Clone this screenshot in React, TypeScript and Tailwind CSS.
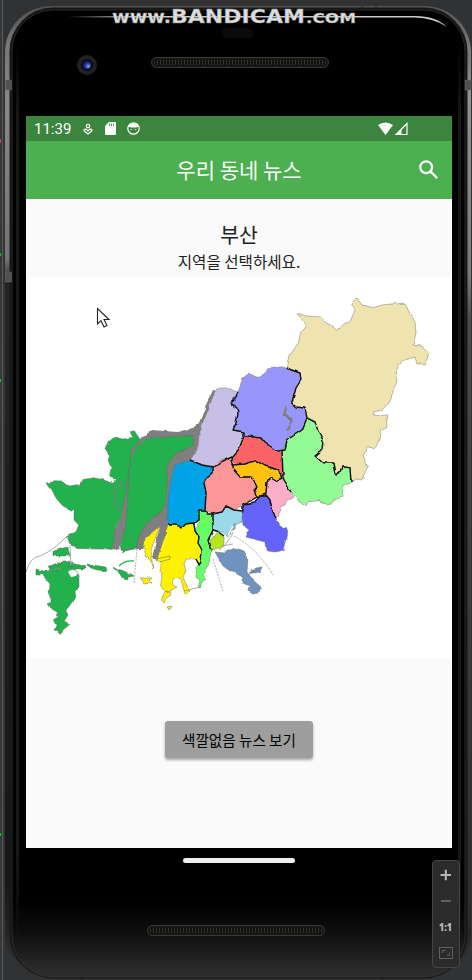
import React from "react";

type Region = { fill: string; points: string };

const regions: Region[] = [
  { fill: "#22b14c", points: "46,483 54,481.7 63,482 69,486 81,484 83,479.5 94,477.7 104,480 112.7,483.3 115.3,480.7 109.3,475 111,468 108.5,461 108,453 105,448.5 107.7,442.7 112,439 115.3,437.3 122.7,439 132.7,437.3 130,431.7 134.3,430.7 140,439.3 131,450 128,478 124,500 122,516 115,528 112,549.3 77.7,548.3 69.3,543.3 67.7,536 76,531.7 78.7,525 74,520 74,510 68,510 61,504 56,498 52,490" },
  { fill: "#22b14c", points: "139,445 145,440 151,437.7 192.7,435.5 193.5,445 178,452 171,459 167,467 167,487 165,508 155,516 145,526 139,537 136,548 122.7,552.7 120,547 125,528 127,510 129,475 131,456" },
  { fill: "#c8bfe7", points: "215,391 220,389 230,388.7 238,392 236,397 230,403 237,408 238,414 236,423 233,430 244,432 243,441 238,450 232,457 223,461 213,466.7 202,465 190,460 198,449 199,434" },
  { fill: "#9896fb", points: "238,392 241,384 243,378 249,373 256,377 260,377 265,373 267,369 281.7,366.7 286,368 300,373 301,380 296,388 291.7,403 296,407 305,408 307,418 301.7,430 287,440 285,450 278,451 265,443 261,438 244,435.5 244,432 233,430 237,421.7 238,411 230,403" },
  { fill: "#efe4b0", points: "296.7,313 306.7,316 320,317 329,324 336.7,330 344,324 350,321.5 355,310 351.7,303 357,298 362,305 373,307.7 382,305 393,304 395,301 397,304 405,303 409,312 415,321.7 416,333 413,345 421.7,346 429,354 425,364 417,364 415,357 401.7,361 395,373 397,381 394,388 391,399 388,404 381.7,410 374,411.7 375,415.7 386.7,415 386.7,427.7 381.7,430 380,438 375,449 368,446.7 363,455 367.7,466.7 361.7,480 356,479 351,482 350,467.7 342,466.7 340,472 336,474 334,463 323,463 315,456 322,450 323,440 318,431 315,422 307,419 305,408 296,407 291.7,403 296,388 301,380 300,373 286,368 289,356 298,344 301,332 307,326" },
  { fill: "#94fa94", points: "307,418 315,422 318,431 323,440 322,450 315,456 323,463 334,463 336,474 340,472 342,466.7 350,467.7 351,482 348,484 343,485 342,497 334,500 328,505 320,500.7 308,501.7 306,505.7 300,501.7 292,494 285,482 282.7,472 282,452 287,440 302,430" },
  { fill: "#fa6466", points: "244,435.5 261,438 265,443 278,451 282.5,453 283,478 278,470 267,466 256.7,460.7 245,465 232,463 232,457 239,449" },
  { fill: "#ffc20e", points: "232,465 245,464 256,460.7 265,466 278,470 281,478 276,481 271,478 267,482 267,493 257,497 254,490 257,487 252,477 240,477 234,470" },
  { fill: "#fb9799", points: "213,466.7 219,461 226,458 231,460 234,470 240,477 252,477 257,487 254,490 257,497 243,505 234,510 226,506 222,512 213,514 205,510 206,493 204,483 207,478 213,473" },
  { fill: "#ffaec9", points: "267,482 271,478 276,481 282,478 287,485 294,498 287,500 285,505 280,507 281,512 276,518 273,513 270,500 266,493" },
  { fill: "#00a2e8", points: "175,465 190,460 202,465 213,467 213,473 207,478 204,483 206,493 205,510 199,510 199,520 194,523 186,524 180,528 176,524 168,524 168,500 170,485" },
  { fill: "#fff200", points: "168,524 176,524 180,528 186,524 194,523 195,531 199,537 198,543 202,550 201,562 199,565 196,559 186,559 184,565 186,571 183,577 187,586 190,591 185,594 181,580 176,578 172,580 173,585 177,587 166,593 160.7,585 162,578 160,570 162,563 156,559" },
  { fill: "#fff200", points: "160,525 155,530 145,538 144,548 146,556 150,560 152.7,569 151,550" },
  { fill: "#66ff66", points: "198,510 203,510 207,514 213,514 213,532 208,540 211,550 209,564 205,570 203,575 206,579 202,582 200,588 198,587 200,581 196,576 197,566 201,562 202,550 198,543 199,537 195,530 199,523" },
  { fill: "#99d9ea", points: "213,514 222,512 226,506 234,510 243,511.7 242,522 235,525 231,534 227,536 222,532 213,530" },
  { fill: "#b5e61d", points: "216.7,531.7 224,537 224,544 220.7,549 211,550 208,540 213,537" },
  { fill: "#6463fb", points: "243,505 255,503 260.7,495 266,495 270,500 273,513 276,518 280,526 287,528 286,539 283,550 275,552 268,551 266,550 265,542 246,537 249,530 243,525 242,516" },
  { fill: "#7092be", points: "215,552 225,553 235,547.7 244,551 248,558 247,572 254,581 260.7,586.7 259,593 253,594 248,591 249,586 243,583 243,577 230,571 223,566" },
  { fill: "#7092be", points: "249,573 256,568 262,567 260,572 254,573" },
  { fill: "#22b14c", points: "36,569 44,571 48,571 49,567 59,562 64,562 71,564 75,569 79,578 79,587 75,591 76,597 71,604 66,610 68,615 65,620 69,625 63,630 60,635 58,632 54,630 56,625 53,620 58,617 57,612 50,608 47,604 51,602 51,597 49,592 50,584 45,578 42,575 36,575" },
  { fill: "#22b14c", points: "53,551 68,547 70,556 53,556" },
  { fill: "#22b14c", points: "72,561 76,564 84,566 85,569 75,569 71,565" },
  { fill: "#22b14c", points: "87,564 106,567 107,571 97,570 88,567" },
  { fill: "#22b14c", points: "112,567 124,571 134,576 129,577 129,580 121,577 119,573" },
  { fill: "#fff200", points: "164,593 170,592 171,595 165,599 164,602 161,600 163,597" },
  { fill: "#fff200", points: "167,607 171,606 169,610" },
];

const borders = [
  "286,368 300,373 301,380 296,388 291.7,403 296,407 305,408 307,418 315,422 318,431 323,440 322,450 315,456 323,463 334,463 336,474 340,472 342,466.7 350,467.7 351,482",
  "238,392 236,397 230,403 237,408 238,414 236,423 233,430 244,432 244,436 239,449 232,457 223,461 213,467 202,465 190,460",
  "307,418 302,430 287,440 285,450 278,451 265,443 261,438 244,435.5",
  "282,451 283,478 287,485 291,492",
  "232,457 232,465 245,464 256,460.7 265,466 278,470 282,478 276,481 271,478 267,482 266,493 257,497 254,490 257,487 252,477 240,477 234,470 231,460",
  "213,467 213,473 207,478 204,483 206,493 205,510 199,510 199,520 194,523 186,524 180,528 176,524 168,524",
  "205,510 207,514 213,514 222,512 226,506 234,510 243,511 243,505 255,503 260.7,495 266,495 270,500 273,513 276,518",
  "257,497 243,505",
  "213,514 213,530 208,540 211,550",
  "213,530 217,531 224,536",
  "194,523 195,531 199,537 198,543 202,550 201,562 199,565 196,559",
];

function BusanMap() {
  return (
    <svg viewBox="26 277 426 381" className="block h-[381px] w-[426px] bg-white">
      <defs>
        <filter id="coast" x="26" y="277" width="426" height="381" filterUnits="userSpaceOnUse" colorInterpolationFilters="sRGB">
          <feTurbulence type="fractalNoise" baseFrequency="0.13" numOctaves="2" seed="7" result="noise" />
          <feDisplacementMap in="SourceGraphic" in2="noise" scale="3.2" xChannelSelector="R" yChannelSelector="G" />
        </filter>
      </defs>
      <g filter="url(#coast)">
        <path
          fill="#7f7f7f"
          d="M213 390 L217 391 L202 425 L200 440 L197 450 L190 461 L175 467 L171 490 L169 513 L168 525 L160 526 L148 536 L143 549 L136 549 L135 540 L146 518 L160 508 L165 470 L175 450 L193 440 L192 436 L151 438 L142 442 L132 455 L129 490 L126 528 L119 549 L111 549 L114 530 L122 516 L124 490 L128 450 L139 440 L152 430 L177 432 L193 428 L199 423 L206 405 Z"
        />
        {regions.map((r, i) => (
          <polygon key={i} points={r.points} fill={r.fill} stroke="#69695f" strokeWidth="0.45" strokeLinejoin="round" />
        ))}
        <path fill="#7f7f7f" d="M161 522 L169 521 L165 536 L157 560 L152 558 L156 541Z" />
        <g fill="none" stroke="#111111" strokeWidth="1.4" strokeLinejoin="round">
          {borders.map((p, i) => (
            <polyline key={i} points={p} />
          ))}
        </g>
        <path
          fill="#7f7f7f"
          d="M285.5 405 L287 409 L286 413 L292 417 L293 421 L290 425 L291 429 L286 430 L288 426 L289 421 L286 416 L282.5 416 L284 411Z"
        />
        <path fill="#22b14c" stroke="#69695f" strokeWidth="0.4" d="M48 566 L70 561 V567 L54 571Z" />
        <path fill="#fff200" stroke="#77773a" strokeWidth="0.5" d="M140 578 L152 578 L149 580 L152 583 L143 584 L144 581Z" />
      </g>
      <g fill="none" stroke="#777777" strokeWidth="0.6">
        <path d="M26 572 Q30 557 40 556 Q54 550 66 537 L77 549 M136 549 L112 549L77 548.5 M70 545L71 568" />
        <path strokeDasharray="2 1.2" d="M137 549 L134 583 M213 559 L223 591 M234 536 Q257 548 273 575" />
        <path d="M227 535 L235 523 L232 535 L225 545 L219 550 M229 532 L236 528 M222 546 L233 544 M184 591 L201 587 M248 575 L262 567" />
        <path stroke="#777733" d="M156 559 L170 556 L170 559 L160 562" />
      </g>
      <path fill="none" stroke="#7f7f7f" strokeWidth="1.3" d="M123 482.5 C112 484 113 500 117 506 L122 513" />
      <path fill="none" stroke="#22b14c" strokeWidth="1.4" d="M119 566 Q125 560 134 561 M139 440 L132 448" />
      <path fill="#fff" d="M68 572 Q73 567 78 573 L76 576 L71 577Z" />
      <path fill="none" stroke="#999" strokeWidth="0.5" d="M47 571 L61 568 L59 571" />
      <path fill="none" stroke="#fff" strokeWidth="1.5" d="M173 582 L176 579 L181 581 M228 535 L233 526 M231 532 L236 530" />
    </svg>
  );
}

function DeviceFrame() {
  return (
    <svg className="absolute inset-0" width="472" height="980" viewBox="0 0 472 980" fill="none">
      <defs>
        <linearGradient id="rim" x1="0" y1="6" x2="0" y2="980" gradientUnits="userSpaceOnUse">
          <stop stopColor="#515151" />
          <stop offset=".04" stopColor="#777777" />
          <stop offset=".1" stopColor="#888888" />
          <stop offset=".26" stopColor="#747474" />
          <stop offset=".285" stopColor="#252525" />
          <stop offset=".9" stopColor="#171717" />
          <stop offset="1" stopColor="#333333" />
        </linearGradient>
        <linearGradient id="rightRim" x1="0" y1="50" x2="0" y2="950" gradientUnits="userSpaceOnUse">
          <stop stopColor="#777777" />
          <stop offset=".05" stopColor="#929292" />
          <stop offset=".25" stopColor="#7a7a7a" />
          <stop offset=".3" stopColor="#4c4c4c" />
          <stop offset="1" stopColor="#292929" />
        </linearGradient>
        <linearGradient id="glass" x1="0" y1="900" x2="0" y2="977" gradientUnits="userSpaceOnUse">
          <stop stopColor="#000000" />
          <stop offset=".4" stopColor="#0d0d0d" />
          <stop offset="1" stopColor="#303030" />
        </linearGradient>
        <linearGradient id="innerEdge" x1="0" y1="40" x2="0" y2="950" gradientUnits="userSpaceOnUse">
          <stop stopColor="#171717" stopOpacity="0" />
          <stop offset=".08" stopColor="#171717" />
          <stop offset=".9" stopColor="#171717" />
          <stop offset="1" stopColor="#171717" stopOpacity="0" />
        </linearGradient>
      </defs>
      <path d="M0 0H4V980H0Z" fill="#36393b" />
      <path d="M2.5 0V980" stroke="#55585a" />
      <path d="M0 139H1V143H0Z" fill="#cc4444" />
      <path d="M0 253H1V256H0ZM0 379H1V382H0ZM0 833H1V836H0Z" fill="#00cc22" />
      <rect x="5" y="6" width="466" height="973" rx="46" fill="url(#rim)" />
      <path d="M467 55H471V928H467Z" fill="url(#rightRim)" />
      <rect x="10.5" y="8.5" width="456" height="969" rx="43" fill="#050505" stroke="#171717" strokeWidth="2" />
      <rect x="12" y="10" width="453" height="967" rx="41" fill="url(#glass)" stroke="#363636" strokeWidth=".8" />
      <path d="M16 40H19V950H16ZM458 40H461V950H458Z" fill="url(#innerEdge)" />
      <path d="M5.5 80H11.5V90H5.5ZM465 80H471V90H465ZM5.5 272H11.5V282H5.5Z" fill="#505050" stroke="#777777" strokeWidth=".4" />
      <path d="M362 6V11M376 6V11" stroke="#242424" />
      <path d="M82 977.5V980M382 977.5V980" stroke="#111111" />
    </svg>
  );
}

function Speaker() {
  return (
    <div className="h-[11px] w-[178px] rounded-full border border-[#393936] bg-[#161614] p-[2px]">
      <div className="h-full rounded-full bg-[repeating-linear-gradient(90deg,#31312d_0px,#31312d_1px,#11110f_1px,#11110f_3px)]" />
    </div>
  );
}

function StatusBar() {
  return (
    <div className="flex h-[25px] items-center bg-[#3b853e] pl-2 pr-11 text-white">
      <div className="flex items-center gap-3">
        <span className="w-[37px] whitespace-nowrap pt-px font-[Roboto] text-[15px] leading-none">11:39</span>
        <svg className="h-3 w-[10px]" viewBox="0 0 10 12" fill="none" stroke="white" strokeWidth="1.2">
          <circle cx="5" cy="3" r="1.7" />
          <path d="M1.2 6.5 L3 6 L5 8 L7 6 L8.8 6.5 V8 L5 11 L1.2 8Z" />
        </svg>
        <svg className="h-[13px] w-[11px]" viewBox="0 0 11 13">
          <path d="M4 0H10Q11 0 11 1V12Q11 13 10 13H1Q0 13 0 12V4Z" fill="white" />
          <path d="M4.5 1.5V4M6.5 1.5V4M8.5 1.5V4" stroke="#3b853e" strokeWidth=".9" />
        </svg>
        <svg className="-ml-px h-[13px] w-[13px]" viewBox="0 0 13 13">
          <circle cx="6.5" cy="6.5" r="5.7" fill="none" stroke="white" strokeWidth="1.2" />
          <path d="M2 5V2L4.5 2.3L6.5 1L8.5 2.3L11 2V5Q6.5 6 2 5Z" fill="white" />
          <path d="M4 7V8M8.7 7V8" stroke="white" />
        </svg>
      </div>
      <svg className="ml-auto h-[14px] w-[30px]" viewBox="0 0 30 14">
        <path d="M0 3 Q7.5 -2 15 3 L7.5 13Z" fill="white" />
        <path d="M18 12.5 L29 1.5 V12.5Z" fill="none" stroke="white" strokeWidth="1.2" />
        <path d="M18 12.5 L23.5 7V12.5Z" fill="white" />
      </svg>
    </div>
  );
}

function ZoomPanel() {
  return (
    <div className="absolute bottom-3 right-3 flex h-[108px] w-7 flex-col items-center rounded border border-[#454545] bg-[#2b2b2b]">
      <svg className="h-[106px] w-[26px]" viewBox="433 861 26 106" fill="none">
        <path d="M440.5 875H451M445.8 869.8V880.2" stroke="#b9b9b9" strokeWidth="2" />
        <path d="M441 901H451" stroke="#606060" strokeWidth="2" />
        <text x="445.5" y="931" textAnchor="middle" fontFamily="Open Sans" fontWeight="800" fontSize="11" fill="#b9b9b9" textLength="13" lengthAdjust="spacingAndGlyphs">1:1</text>
        <rect x="439.5" y="947.5" width="13" height="11" stroke="#606060" />
        <path d="M442.5 953V950.5H446M447 955.5H449.5V952.5" stroke="#606060" />
      </svg>
    </div>
  );
}

function Watermark() {
  return (
    <svg className="absolute inset-x-0 top-0 h-[48px] w-[472px]" viewBox="0 0 472 48">
      <defs>
        <linearGradient id="shine" x1="68" x2="140" y1="0" y2="0" gradientUnits="userSpaceOnUse">
          <stop stopColor="#ccc" stopOpacity="0" />
          <stop offset="1" stopColor="#ccc" />
        </linearGradient>
      </defs>
      <path d="M68 16H415Q436 16 447 27Q434 18 415 17.5H68Z" fill="url(#shine)" />
      <g fill="#dddddd" stroke="#888888" strokeWidth="0.35" fontFamily="DejaVu Sans" fontWeight="700">
        <text x="112" y="23" fontSize="17" textLength="59" lengthAdjust="spacingAndGlyphs">www.</text>
        <text x="171" y="23" fontSize="19" textLength="134" lengthAdjust="spacingAndGlyphs">BANDICAM</text>
        <text x="306" y="23" fontSize="14" textLength="50" lengthAdjust="spacingAndGlyphs">.COM</text>
      </g>
    </svg>
  );
}

export default function App() {
  return (
    <div className="relative h-[980px] w-[472px] overflow-hidden bg-[#303234] font-['Noto_Sans_CJK_KR',sans-serif]">
      <DeviceFrame />
      <div className="relative flex h-full flex-col pl-[26px] pr-5">
        <div className="flex h-[116px] shrink-0 items-start gap-[54px] pl-[51px] pt-[55px]">
          <div className="flex h-5 w-5 items-center justify-center rounded-full border-[4px] border-[#202124] bg-[#08091c]">
            <div className="h-2 w-2 rounded-full bg-[radial-gradient(circle_at_65%_65%,#9ab3ff_0%,#2838a0_35%,#10163b_80%)]" />
          </div>
          <div className="pt-[2px]"><Speaker /></div>
        </div>
        <main className="flex h-[732px] w-[426px] shrink-0 flex-col bg-[#fafafa]">
          <StatusBar />
          <header className="grid h-[58px] grid-cols-[1fr_auto_1fr] items-center bg-[#4caf50] text-white">
            <h1 className="col-start-2 whitespace-nowrap pb-[2px] text-[21px] font-normal leading-none">우리 동네 뉴스</h1>
            <svg className="mb-px mr-[14px] h-[19px] w-[19px] justify-self-end" viewBox="0 0 18 18" fill="none" stroke="white" strokeWidth="2.1">
              <circle cx="6.8" cy="6.8" r="5.6" />
              <path d="M10.8 10.8L17.2 17.2" />
            </svg>
          </header>
          <section className="flex h-[78px] flex-col items-center pt-[21px] text-[#212121]">
            <h2 className="h-[29px] text-[20.5px] leading-[28px]">부산</h2>
            <p className="h-6 text-[15.6px] leading-6">지역을 선택하세요.</p>
          </section>
          <BusanMap />
          <div className="flex flex-1 items-start justify-center pt-[63px]">
            <button className="h-[37px] w-[148px] rounded-[3px] bg-[#9e9e9e] pt-[2px] text-[14.6px] leading-none text-black shadow-[0_2px_3px_rgba(0,0,0,0.35)]">색깔없음 뉴스 보기</button>
          </div>
        </main>
        <div className="flex flex-col items-center gap-[62px] pt-[10px]">
          <div className="h-[5px] w-[112px] rounded-full bg-[#eeeeee]" />
          <div className="pr-[6px]"><Speaker /></div>
        </div>
      </div>
      <svg className="absolute left-[222px] top-7 h-[10px] w-8" viewBox="0 0 32 10">
        <rect width="32" height="10" rx="5" fill="#0b0b0e" />
      </svg>
      <Watermark />
      <svg className="absolute left-24 top-[307px] h-[21px] w-[15px]" viewBox="0 0 15 21">
        <path d="M1.5 1.5V17L5 13.7L8 20L11 18.5L8 12.5H13Z" fill="white" stroke="#222" strokeWidth="1.1" />
      </svg>
      <ZoomPanel />
    </div>
  );
}
